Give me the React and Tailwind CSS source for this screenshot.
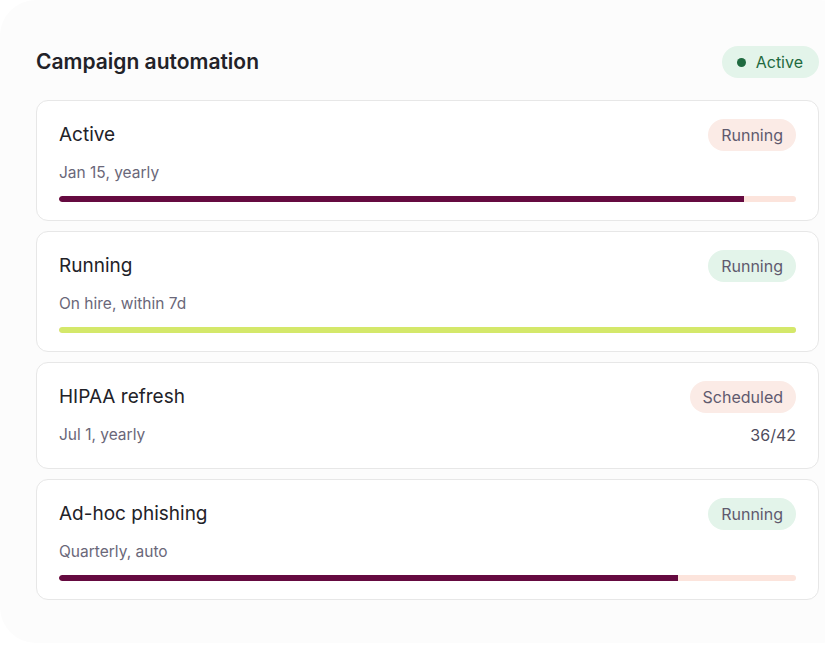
import React from 'react';

const campaigns = [
    { title: 'Active', sub: 'Jan 15, yearly', pill: 'Running', tone: 'rose', bar: 93, barColor: 'bg-[#650a40]', track: 'bg-[#fce4dc]' },
    { title: 'Running', sub: 'On hire, within 7d', pill: 'Running', tone: 'green', bar: 100, barColor: 'bg-[#d4e86a]', track: 'bg-[#fce4dc]' },
    { title: 'HIPAA refresh', sub: 'Jul 1, yearly', pill: 'Scheduled', tone: 'rose', count: '36/42' },
    { title: 'Ad-hoc phishing', sub: 'Quarterly, auto', pill: 'Running', tone: 'green', bar: 84, barColor: 'bg-[#650a40]', track: 'bg-[#fce4dc]' },
];

function Pill({ tone, children }) {
    const bg = tone === 'green' ? 'bg-[#e3f4ea]' : 'bg-[#fbebe6]';
    return (
        <span className={`${bg} h-8 rounded-full px-[13px] flex items-center text-[16px] text-[#5f5a6e]`}>
            {children}
        </span>
    );
}

function CampaignCard({ c }) {
    return (
        <div className={`bg-white border border-[#e7e7e7] rounded-[12px] pl-[22px] pr-[22px] pt-[18px] ${c.count ? 'pb-[21px]' : 'pb-[18px]'}`}>
            <div className="flex items-center justify-between h-8">
                <span className="text-[19px] text-[#222228]">{c.title}</span>
                <Pill tone={c.tone}>{c.pill}</Pill>
            </div>
            <div className="flex items-center justify-between mt-[10px] h-6 text-[15.5px] text-[#6a6779]">
                <span>{c.sub}</span>
                {c.count && <span className="text-[16px] text-[#4f4c5c]">{c.count}</span>}
            </div>
            {c.bar != null && (
                <div className={`${c.track} mt-[11px] h-[6px] rounded-full overflow-hidden`}>
                    <div className={`${c.barColor} h-full rounded-l-full`} style={{ width: `${c.bar}%` }} />
                </div>
            )}
        </div>
    );
}

export default function App() {
    return (
        <div className="w-[825px] h-[645px] overflow-hidden bg-white" style={{ fontFamily: 'Inter, "Open Sans", sans-serif' }}>
            <div className="w-[855px] h-[643px] bg-[#fcfcfc] rounded-[36px] pl-[36px] pr-[36px] pt-[46px]">
                <div className="w-[783px]">
                    <div className="flex items-center justify-between h-8">
                        <h1 className="text-[21px] font-semibold text-[#222228]">Campaign automation</h1>
                        <span className="bg-[#e3f4ea] h-8 rounded-full pl-[15px] pr-[16px] flex items-center gap-[10px] text-[16px] text-[#1f6a40]">
                            <span className="w-[9px] h-[9px] rounded-full bg-[#1f6a40]" />
                            Active
                        </span>
                    </div>
                    <div className="mt-[22px] flex flex-col gap-[10px]">
                        {campaigns.map((c) => (
                            <CampaignCard key={c.title} c={c} />
                        ))}
                    </div>
                </div>
            </div>
        </div>
    );
}
